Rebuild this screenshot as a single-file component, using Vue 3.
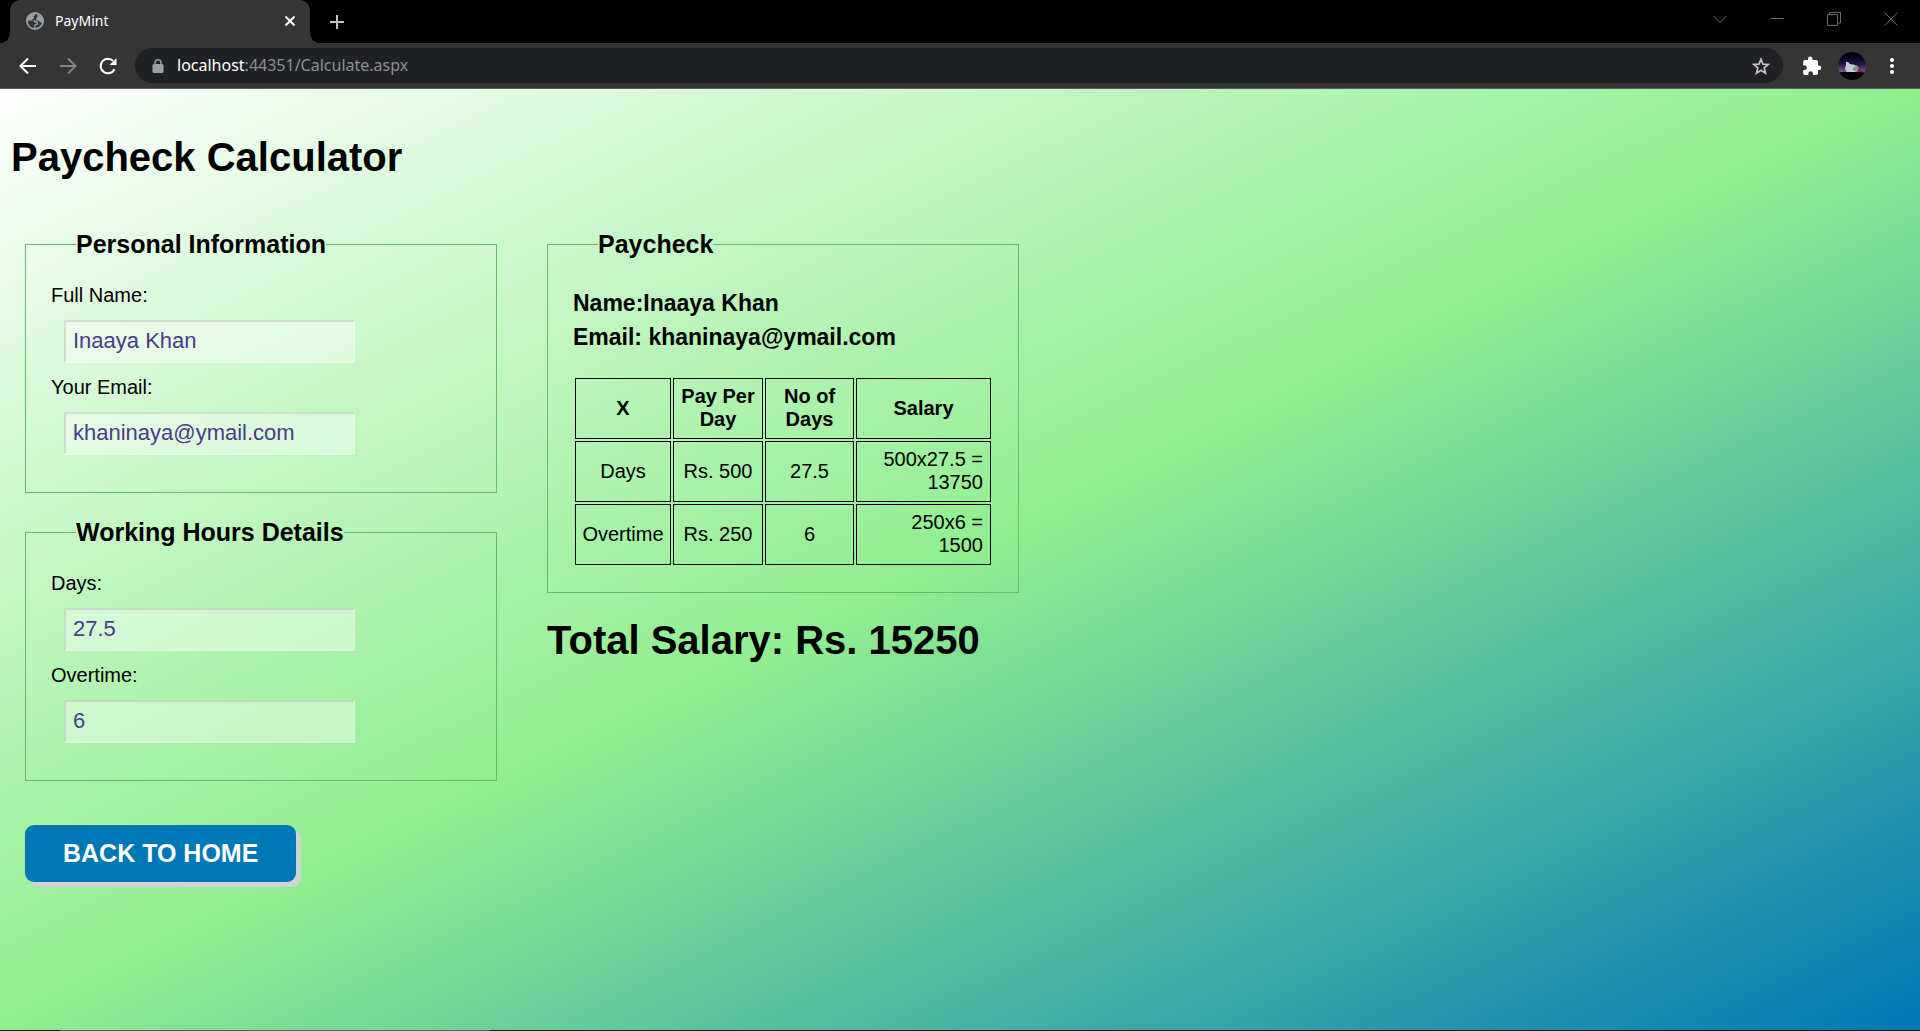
<script setup>
import { ref } from 'vue'

const fullName = ref('Inaaya Khan')
const email = ref('khaninaya@ymail.com')
const days = ref('27.5')
const overtime = ref('6')

const rows = [
  { kind: 'Days', rate: 500, count: '27.5', total: 13750 },
  { kind: 'Overtime', rate: 250, count: '6', total: 1500 },
]
</script>

<template>
  <div class="window">
    <header class="chrome">
      <div class="tab-strip">
        <div class="tab">
          <svg class="globe" width="18" height="18" viewBox="0 0 18 18" aria-hidden="true">
            <circle cx="9" cy="9" r="8" fill="#353535" stroke="#9aa0a6" stroke-width="2" />
            <path d="M1.500 6C3 3 5.500 1.200 9 1.200L9.500 2.500 7.500 4.500 8 6.500 6 7.500 6.500 8.500H10.500L12 10.500V12.500L9.500 13.500 9 16.500 7.500 16.500 7.500 13.500 5.500 11.500 2 8.500z" fill="#9aa0a6" />
            <path d="M11 2l4.500 3 1.500 5-2.500.5-1.500-1.500-2-.5-1-2 1.500-1.500z" fill="#9aa0a6" />
            <path d="M2 8.500h5l1.500 2h2v1.500H8.500V14L7 16C4 15 2 12.500 2 9z" fill="#353535" />
          </svg>
          <span class="tab-title">PayMint</span>
          <button class="icon-button" type="button" aria-label="Close tab">
            <svg width="12" height="12" viewBox="0 0 12 12"><path d="M1.500 1.500l9 9M10.500 1.500l-9 9" stroke="#fff" stroke-width="2" /></svg>
          </button>
        </div>
        <button class="icon-button new-tab" type="button" aria-label="New tab">
          <svg width="16" height="16" viewBox="0 0 16 16"><path d="M8 1v14M1 8h14" stroke="#c4c4c4" stroke-width="2" /></svg>
        </button>
        <div class="window-controls">
          <button class="icon-button" type="button" aria-label="Search tabs">
            <svg width="14" height="14" viewBox="0 0 14 14"><path d="M.5 4l6.500 6.500L13.500 4" fill="none" stroke="#6b6b6b" /></svg>
          </button>
          <button class="icon-button" type="button" aria-label="Minimize">
            <svg width="14" height="14" viewBox="0 0 14 14"><path d="M.5 6.500h13" stroke="#6b6b6b" /></svg>
          </button>
          <button class="icon-button" type="button" aria-label="Restore">
            <svg width="14" height="14" viewBox="0 0 14 14"><path d="M.5 2.500h10v11H.5zM2.500 2.500V.5h11v10.500H11" fill="none" stroke="#6b6b6b" /></svg>
          </button>
          <button class="icon-button" type="button" aria-label="Close">
            <svg width="14" height="14" viewBox="0 0 14 14"><path d="M.5 .5l13 13M13.500 .5l-13 13" stroke="#6b6b6b" /></svg>
          </button>
        </div>
      </div>

      <div class="toolbar">
        <button class="icon-button" type="button" aria-label="Back">
          <svg width="18" height="18" viewBox="0 0 18 18"><path d="M17 9H2M9 1.500L1.500 9 9 16.500" fill="none" stroke="#fff" stroke-width="2" /></svg>
        </button>
        <button class="icon-button" type="button" aria-label="Forward">
          <svg width="18" height="18" viewBox="0 0 18 18"><path d="M1 9h15M9 1.500L16.500 9 9 16.500" fill="none" stroke="#858585" stroke-width="2" /></svg>
        </button>
        <button class="icon-button" type="button" aria-label="Reload">
          <svg width="18" height="18" viewBox="0 0 18 18"><path d="M15.500 12.200A7.300 7.300 0 1 1 14.200 3.900" fill="none" stroke="#fff" stroke-width="2" /><path d="M17.500 1v7h-7z" fill="#fff" /></svg>
        </button>
        <div class="omnibox">
          <svg class="lock" width="12" height="14" viewBox="0 0 12 14" aria-hidden="true"><path d="M3 6V3.800a3 3 0 0 1 6 0V6" fill="none" stroke="#9aa0a6" stroke-width="1.500" /><rect x=".5" y="5" width="11" height="9" rx="1.500" fill="#9aa0a6" /></svg>
          <span class="url"><span class="host">localhost</span>:44351/Calculate.aspx</span>
          <button class="icon-button" type="button" aria-label="Bookmark this page">
            <svg width="18" height="18" viewBox="0 0 18 18"><path d="M9 2.200l2 4.900 5.200.4-4 3.400 1.300 5.200L9 13.300l-4.500 2.800 1.300-5.200-4-3.400L7 7.100z" fill="none" stroke="#c4c4c4" stroke-width="1.700" /></svg>
          </button>
        </div>
        <div class="actions">
          <button class="icon-button" type="button" aria-label="Extensions">
            <svg width="20" height="20" viewBox="0 0 20 20"><path d="M17 9.500h-1V6a2 2 0 0 0-2-2h-3.500V2.700a2.200 2.200 0 0 0-4.500 0V4H3a2 2 0 0 0-1.800 2v3.300h1.300a2.300 2.300 0 0 1 0 4.700H1.200v3.300A1.800 1.800 0 0 0 3 19h3.300v-1.300a2.300 2.300 0 0 1 4.700 0V19h3a2 2 0 0 0 2-2v-3h1a2.200 2.200 0 0 0 0-4.500z" fill="#fff" /></svg>
          </button>
          <button class="icon-button" type="button" aria-label="Profile">
            <svg width="28" height="28" viewBox="0 0 28 28">
              <defs>
                <linearGradient id="dusk" x1="0" y1="0" x2="0" y2="1">
                  <stop offset="0" stop-color="#000" />
                  <stop offset=".2" stop-color="#05031c" />
                  <stop offset=".45" stop-color="#241a4c" />
                  <stop offset=".7" stop-color="#84528c" />
                  <stop offset=".71" stop-color="#050308" />
                  <stop offset="1" stop-color="#000" />
                </linearGradient>
              </defs>
              <circle cx="14" cy="14" r="14" fill="url(#dusk)" />
              <path d="M8 10l2 0 2 2 5 1 4 4-3 3H9l-2-3 1-4z" fill="#c5c8d6" />
              <path d="M14 17l5-4 2 4-3 3z" fill="#8e8c9a" />
              <path d="M20 17l6 3-1 1-5-2z" fill="#9b1237" />
            </svg>
          </button>
          <button class="icon-button menu" type="button" aria-label="Menu">
            <svg width="4" height="16" viewBox="0 0 4 16"><circle cx="2" cy="2" r="2" fill="#fff" /><circle cx="2" cy="8" r="2" fill="#fff" /><circle cx="2" cy="14" r="2" fill="#fff" /></svg>
          </button>
        </div>
      </div>
    </header>

    <main class="page">
      <h1>Paycheck Calculator</h1>
      <div class="columns">
        <form class="column" @submit.prevent>
          <fieldset>
            <legend>Personal Information</legend>
            <label for="full-name">Full Name:</label>
            <input id="full-name" v-model="fullName" type="text" />
            <label for="email">Your Email:</label>
            <input id="email" v-model="email" type="text" />
          </fieldset>
          <fieldset>
            <legend>Working Hours Details</legend>
            <label for="days">Days:</label>
            <input id="days" v-model="days" type="text" />
            <label for="overtime">Overtime:</label>
            <input id="overtime" v-model="overtime" type="text" />
          </fieldset>
          <button class="home" type="button">BACK TO HOME</button>
        </form>

        <section class="column">
          <fieldset class="paycheck">
            <legend>Paycheck</legend>
            <h3>Name:Inaaya Khan<br />Email: khaninaya@ymail.com</h3>
            <table>
              <colgroup>
                <col class="col-kind" />
                <col class="col-rate" />
                <col class="col-count" />
                <col />
              </colgroup>
              <thead>
                <tr>
                  <th>X</th>
                  <th>Pay Per<br />Day</th>
                  <th>No of<br />Days</th>
                  <th>Salary</th>
                </tr>
              </thead>
              <tbody>
                <tr v-for="row in rows" :key="row.kind">
                  <td>{{ row.kind }}</td>
                  <td>Rs. {{ row.rate }}</td>
                  <td>{{ row.count }}</td>
                  <td class="amount">{{ row.rate }}x{{ row.count }} =<br />{{ row.total }}</td>
                </tr>
              </tbody>
            </table>
          </fieldset>
          <h2>Total Salary: Rs. 15250</h2>
        </section>
      </div>
    </main>
    <div class="taskbar-edge"></div>
  </div>
</template>

<style>
body {
  margin: 0;
}
</style>

<style scoped>
.window {
  display: flex;
  flex-direction: column;
  min-height: 100vh;
  font-family: "Liberation Sans", Arial, sans-serif;
  font-size: 20px;
  line-height: 23px;
  color: #000;
}

.chrome {
  font-family: "Noto Sans", "Open Sans", sans-serif;
  background: #353535;
  border-bottom: 1px solid #5c5c5c;
}

.icon-button {
  display: flex;
  padding: 0;
  border: 0;
  background: none;
}

.tab-strip {
  display: flex;
  align-items: flex-end;
  height: 43px;
  background: #000;
}

.tab {
  position: relative;
  display: flex;
  align-items: center;
  box-sizing: border-box;
  width: 300px;
  height: 43px;
  margin-left: 10px;
  padding: 0 14px 2px 16px;
  border-radius: 10px 10px 0 0;
  background: #353535;
}

.tab::before,
.tab::after {
  content: "";
  position: absolute;
  bottom: 0;
  width: 10px;
  height: 10px;
}

.tab::before {
  right: 100%;
  background: radial-gradient(circle at 0 0, #000 10px, #353535 10px);
}

.tab::after {
  left: 100%;
  background: radial-gradient(circle at 100% 0, #000 10px, #353535 10px);
}

.tab-title {
  flex: 1;
  padding-left: 11px;
  font-size: 14px;
  color: #fff;
}

.new-tab {
  align-self: center;
  margin-left: 19px;
}

.window-controls {
  display: flex;
  gap: 43px;
  margin: 0 22px 17px auto;
}

.toolbar {
  display: flex;
  align-items: center;
  height: 45px;
  padding: 0 26px 0 19px;
}

.toolbar > .icon-button + .icon-button {
  margin-left: 22px;
}

.omnibox {
  display: flex;
  flex: 1;
  align-items: center;
  height: 35px;
  margin: 0 19px 0 18px;
  padding: 0 13px 0 17px;
  border-radius: 18px;
  background: #202124;
}

.url {
  flex: 1;
  padding-left: 13px;
  font-size: 16px;
  color: #8c8f93;
}

.host {
  color: #fff;
}

.actions {
  display: flex;
  align-items: center;
  gap: 16px;
}

.menu {
  margin-left: 8px;
}

.page {
  flex: 1;
  padding: 45px 25px 0;
  background: linear-gradient(to bottom right, #fff, lightgreen, #0077b6);
}

h1,
h2 {
  margin: 0;
  font-size: 40px;
  line-height: 46px;
}

h1 {
  margin: 0 0 50px -14px;
}

h2 {
  margin-top: 24px;
}

.columns {
  display: flex;
  align-items: flex-start;
  gap: 50px;
}

.column {
  flex: 0 1 472px;
  min-width: 0;
}

fieldset {
  min-width: 0;
  margin: 0 0 25px;
  padding: 26px 25px 37px;
  border: 1px solid #66bb6a;
}

legend {
  margin-left: 25px;
  padding: 0;
  font-size: 25px;
  font-weight: bold;
  line-height: 28px;
}

label {
  display: block;
}

input {
  display: block;
  box-sizing: border-box;
  width: 291px;
  max-width: 100%;
  height: 43px;
  margin: 13px;
  padding: 0 7px 2px;
  border: 2px solid;
  border-color: rgba(204, 204, 204, 0.6) rgba(255, 255, 255, 0.5) rgba(255, 255, 255, 0.5) rgba(204, 204, 204, 0.6);
  background: rgba(255, 255, 255, 0.4);
  background-clip: padding-box;
  font-family: inherit;
  font-size: 22px;
  color: darkslateblue;
}

input:last-child {
  margin-bottom: 0;
}

.home {
  display: block;
  margin-top: 44px;
  padding: 14px 38px 15px;
  border: 0;
  border-radius: 9px;
  background: #0077b6;
  box-shadow: 5px 5px 0 lightgray;
  font-family: inherit;
  font-size: 25px;
  font-weight: bold;
  line-height: 28px;
  color: #fff;
}

.paycheck {
  margin-bottom: 0;
  padding-bottom: 25px;
}

h3 {
  margin: 2px 0 22px;
  font-size: 23px;
  line-height: 34px;
}

table {
  width: 100%;
  table-layout: fixed;
  border-spacing: 2px;
}

.col-kind {
  width: 96px;
}

.col-rate {
  width: 90px;
}

.col-count {
  width: 89px;
}

th,
td {
  padding: 6px 6px 7px;
  border: 1px solid #000;
  text-align: center;
}

.amount {
  padding-right: 7px;
  text-align: right;
}

.taskbar-edge {
  height: 1px;
  background: linear-gradient(to right, #1b1b1b 60px, #5f5f5f 60px, #5f5f5f 490px, #1b1b1b 490px);
}
</style>
